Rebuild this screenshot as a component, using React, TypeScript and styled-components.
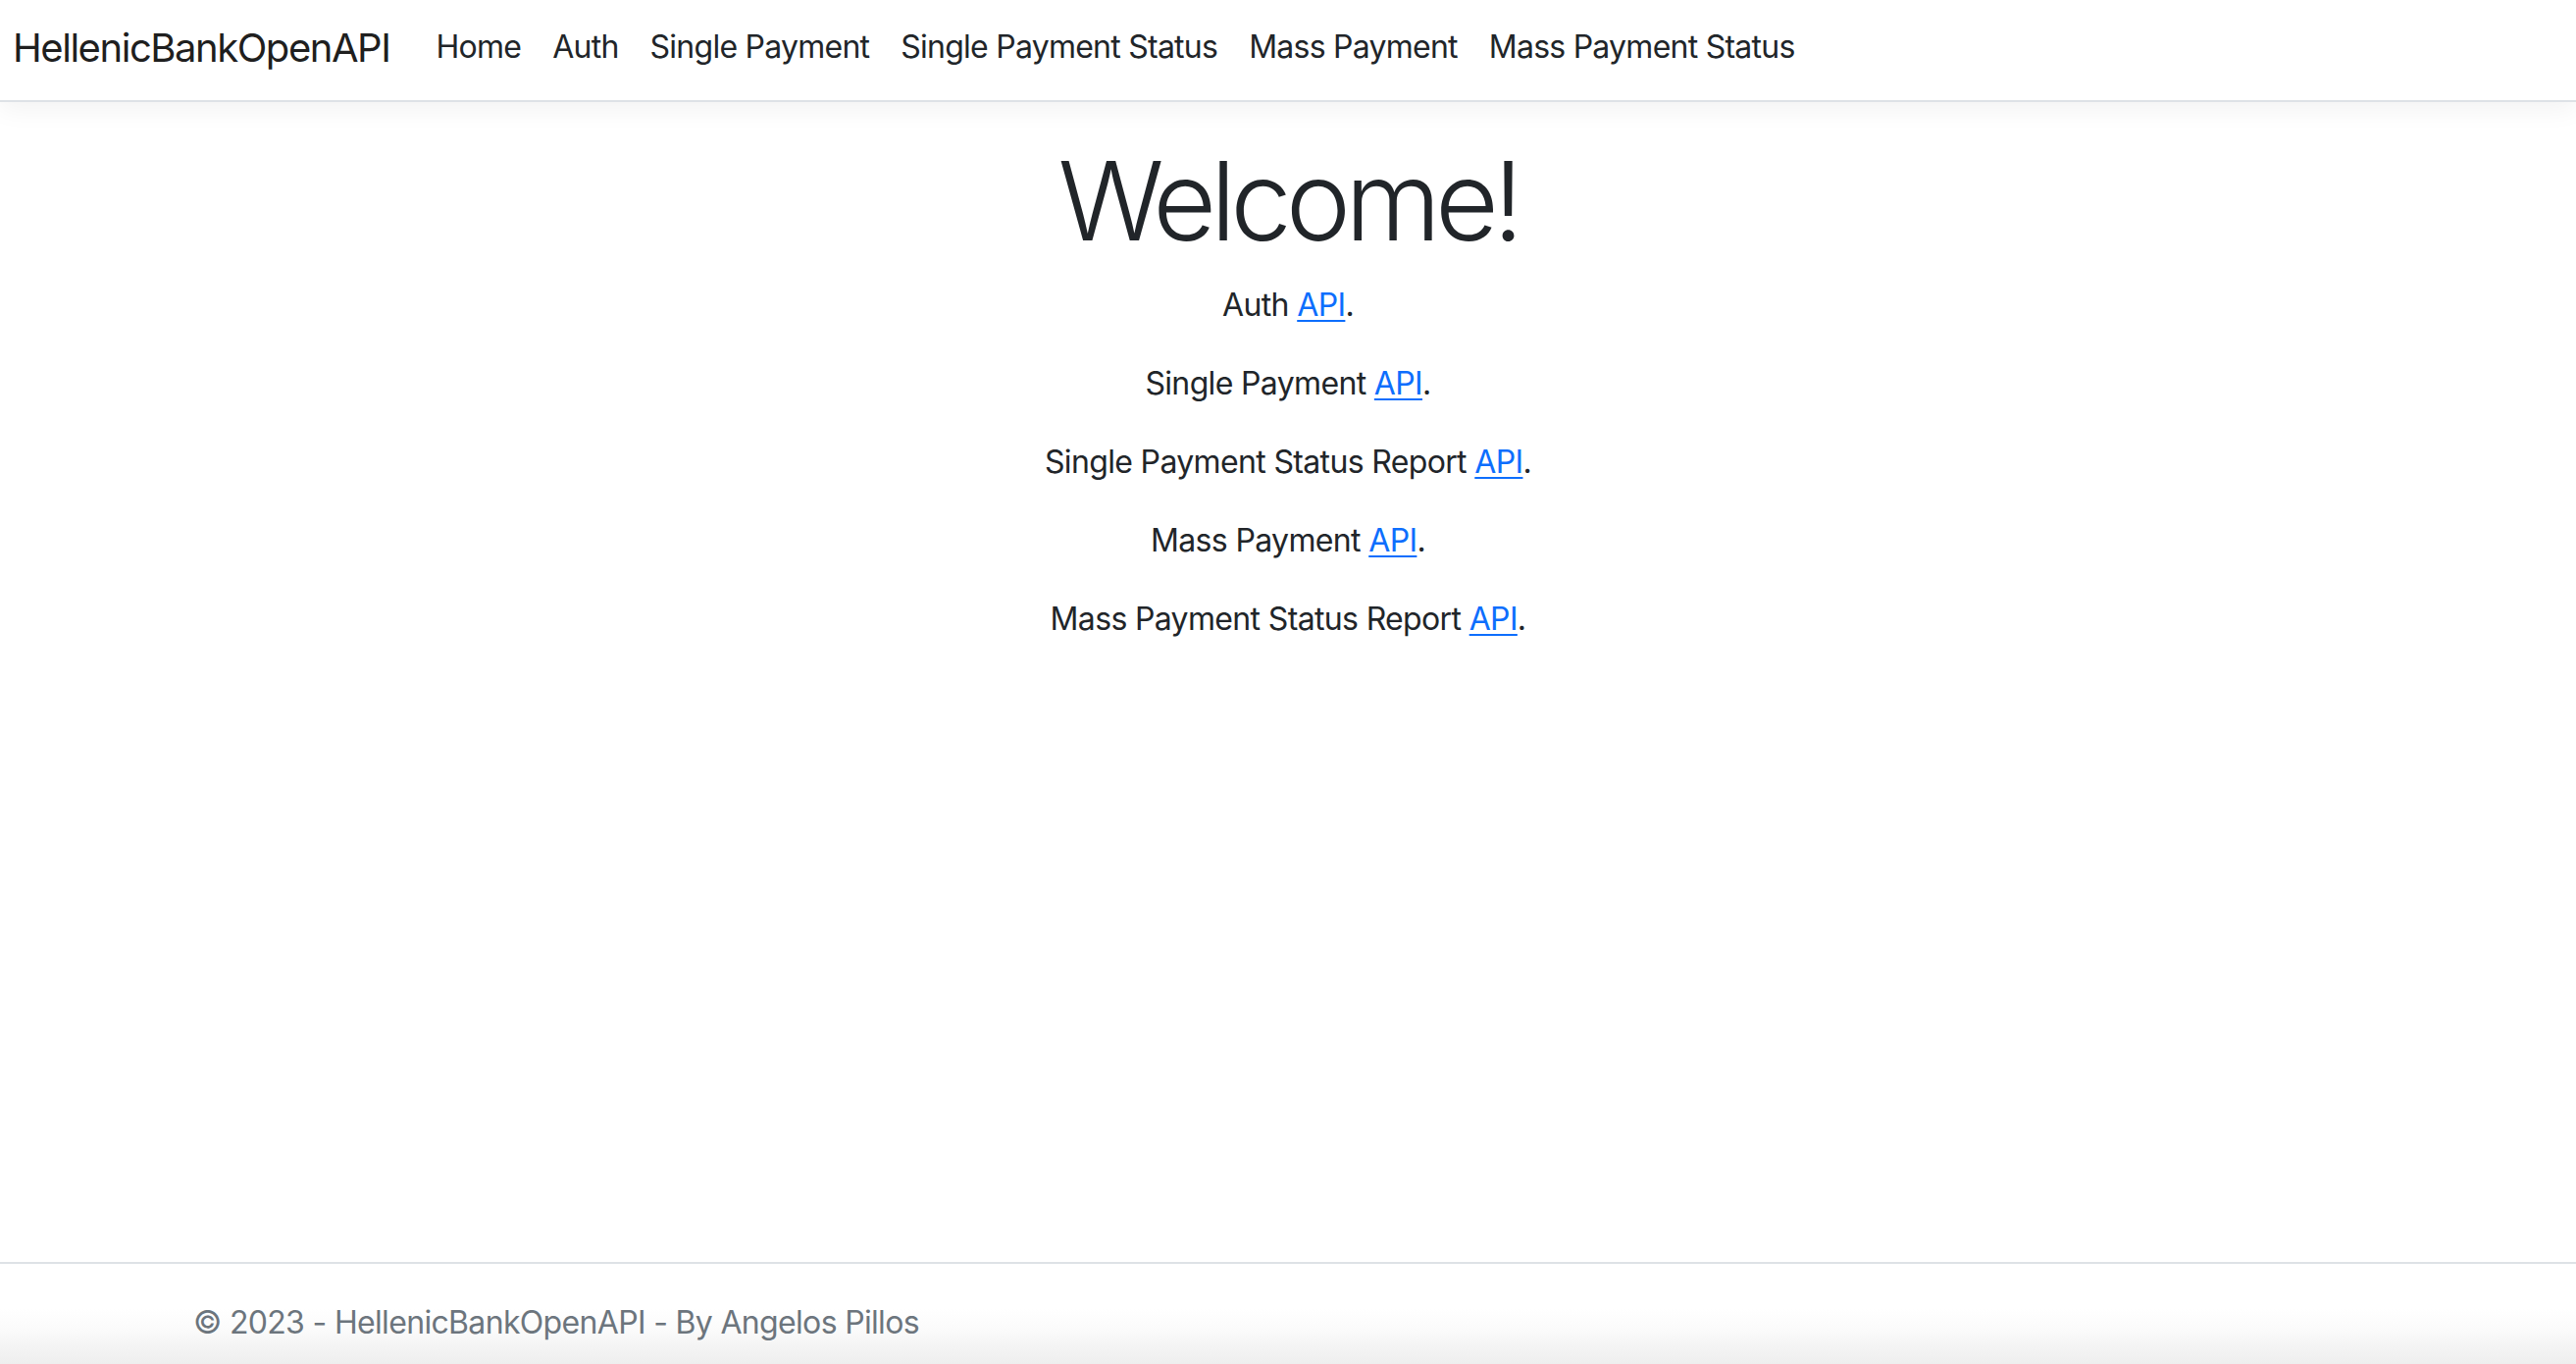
import styled, { createGlobalStyle } from 'styled-components';

const GlobalStyle = createGlobalStyle`
  html, body {
    margin: 0;
    padding: 0;
    background: #fff;
  }
  body {
    font-family: Inter, "Liberation Sans", Arial, sans-serif;
    color: #212529;
  }
  * {
    box-sizing: border-box;
  }
`;

const Page = styled.div`
  display: flex;
  flex-direction: column;
  height: 1390px;
  overflow: hidden;
`;

const Navbar = styled.header`
  display: flex;
  align-items: center;
  height: 104px;
  padding: 0 13px 7px;
  background: #fff;
  border-bottom: 2px solid #dee2e6;
  box-shadow: 0 8px 24px rgba(0, 0, 0, 0.05);
  position: relative;
  z-index: 1;
`;

const Brand = styled.a`
  font-size: 40px;
  color: rgba(0, 0, 0, 0.9);
  text-decoration: none;
  margin-right: 31px;
  letter-spacing: -1.45px;
  padding-top: 2px;
`;

const NavList = styled.ul`
  display: flex;
  list-style: none;
  margin: 0;
  padding: 0;
`;

const NavLink = styled.a`
  display: block;
  padding: 0 16px;
  font-size: 32px;
  color: #212529;
  text-decoration: none;
  letter-spacing: -0.75px;
`;

const Main = styled.main`
  flex: 1;
  display: flex;
  flex-direction: column;
  align-items: center;
  padding-top: 33px;
`;

const Title = styled.h1`
  font-size: 112px;
  font-weight: 300;
  line-height: 134px;
  margin: 0 0 16px;
  letter-spacing: -6px;
`;

const Line = styled.p`
  font-size: 32px;
  line-height: 48px;
  margin: 0 0 32px;
  letter-spacing: -0.65px;
  a {
    color: #0d6efd;
    text-decoration: underline;
    text-underline-offset: 4px;
    text-decoration-thickness: 2px;
  }
`;

const Footer = styled.footer`
  height: 104px;
  border-top: 2px solid #dee2e6;
  line-height: 120px;
  white-space: nowrap;
  color: #6c757d;
  font-size: 32px;
  letter-spacing: -0.67px;
  background: linear-gradient(
    to bottom,
    #fff 0%,
    #fff 45%,
    #fbfbfb 65%,
    #f3f3f3 85%,
    #eeeeee 100%
  );
`;

const FooterInner = styled.div`
  width: 2280px;
  margin: 0 auto;
  padding: 0 24px;
  overflow: hidden;
  height: 100%;
`;

const navItems = [
  'Home',
  'Auth',
  'Single Payment',
  'Single Payment Status',
  'Mass Payment',
  'Mass Payment Status',
];

const apis = [
  'Auth',
  'Single Payment',
  'Single Payment Status Report',
  'Mass Payment',
  'Mass Payment Status Report',
];

export default function App() {
  return (
    <Page>
      <GlobalStyle />
      <Navbar>
        <Brand href="#">HellenicBankOpenAPI</Brand>
        <NavList>
          {navItems.map((item) => (
            <li key={item}>
              <NavLink href="#">{item}</NavLink>
            </li>
          ))}
        </NavList>
      </Navbar>
      <Main>
        <Title>Welcome!</Title>
        {apis.map((api) => (
          <Line key={api}>
            {api} <a href="#">API</a>.
          </Line>
        ))}
      </Main>
      <Footer>
        <FooterInner>© 2023 - HellenicBankOpenAPI - By Angelos Pillos</FooterInner>
      </Footer>
    </Page>
  );
}
